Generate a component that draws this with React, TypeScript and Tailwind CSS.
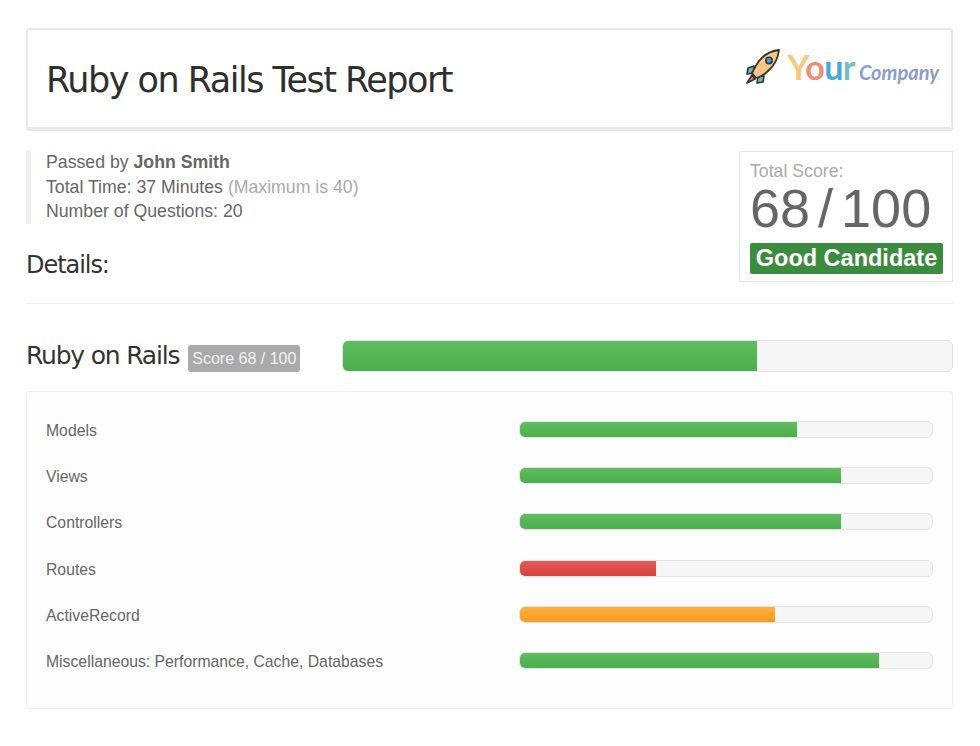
import React from "react";

type Skill = { name: string; width: string; color: string };

const green = "bg-gradient-to-b from-[#5fbe5f] to-[#4cae4c]";

const skills: Skill[] = [
  { name: "Models", width: "w-[67.3%]", color: green },
  { name: "Views", width: "w-[78%]", color: green },
  { name: "Controllers", width: "w-[78%]", color: green },
  { name: "Routes", width: "w-[33%]", color: "bg-gradient-to-b from-[#e35b5a] to-[#d43f3a]" },
  { name: "ActiveRecord", width: "w-[62%]", color: "bg-gradient-to-b from-[#ffb03b] to-[#fb9a1c]" },
  { name: "Miscellaneous: Performance, Cache, Databases", width: "w-[87.2%]", color: green },
];

const Rocket = () => (
  <svg width="36" height="36" viewBox="0 0 36 36" className="shrink-0">
    <path d="M9 17 L3 19 L2 25 L9 24 Z" fill="#6fb6c4" stroke="#333" strokeWidth="1.6" strokeLinejoin="round" />
    <path d="M19 27 L18 33 L12 34 L13 27 Z" fill="#6fb6c4" stroke="#333" strokeWidth="1.6" strokeLinejoin="round" />
    <path d="M7 26 L2 34 L10 30 Z" fill="#ee8266" stroke="#333" strokeWidth="1.6" strokeLinejoin="round" />
    <path d="M34 1 C25 2 18 7 14 12 C11 16 9 20 7 24 L11 29 C15 28 19 26 23 22 C29 17 33 10 34 1 Z" fill="#f8c684" stroke="#333" strokeWidth="1.8" strokeLinejoin="round" />
    <circle cx="24" cy="11.5" r="3.2" fill="#3f9fdc" stroke="#333" strokeWidth="1.5" />
  </svg>
);

const Logo = () => (
  <div className="flex items-center">
    <Rocket />
    <div className="ml-[6px] flex items-baseline font-['Lato',sans-serif]">
      <span className="text-[34px] font-bold leading-none tracking-[-0.5px]">
        <span className="text-[#f6c77f]">Y</span>
        <span className="text-[#ee8d77]">o</span>
        <span className="text-[#45a9dc]">u</span>
        <span className="text-[#7fbcc0]">r</span>
      </span>
      <span className="ml-[4px] text-[20px] italic font-bold leading-none text-[#8b9cc9]">Company</span>
    </div>
  </div>
);

const Bar = ({ width, color, big }: { width: string; color: string; big?: boolean }) => (
  <div
    className={`overflow-hidden border border-[#e3e3e3] bg-[#f6f6f6] ${
      big ? "h-[32px] rounded-[6px]" : "h-[17px] rounded-[6px]"
    }`}
  >
    <div className={`h-full ${width} ${color}`}></div>
  </div>
);

export default function App() {
  return (
    <div className="min-h-[746px] bg-white pl-[26px] pr-[27px] pt-[28px] font-['Liberation_Sans',sans-serif] text-[17.7px] text-[#666]">
      <div className="flex h-[103px] items-start justify-between rounded-[3px] border-2 border-b-4 border-[#e8e8e8] pl-[18px] pr-[12px]">
        <h1 className="mt-[28px] whitespace-nowrap font-['DejaVu_Sans',sans-serif] text-[35px] leading-[44px] tracking-[-1.5px] text-[#2f2f2f]">
          Ruby on Rails Test Report
        </h1>
        <div className="mt-[19px]">
          <Logo />
        </div>
      </div>

      <div className="mt-[19px] flex items-start justify-between">
        <div className="flex-1">
          <div className="border-l-[5px] border-[#eee] pl-[15px] leading-[24.5px]">
            <div>
              Passed by <b>John Smith</b>
            </div>
            <div>
              Total Time: 37 Minutes <span className="text-[#aaa]">(Maximum is 40)</span>
            </div>
            <div>Number of Questions: 20</div>
          </div>
          <h2 className="mt-[24px] font-['DejaVu_Sans',sans-serif] text-[24px] leading-[34px] tracking-[-1.05px] text-[#333]">
            Details:
          </h2>
        </div>
        <div className="mt-px h-[131px] w-[214px] border border-[#e6e6e6] pl-[10px] pr-[9px] pt-[8px]">
          <div className="leading-[22px] text-[#aaa]">Total Score:</div>
          <div className="mt-[-1px] whitespace-nowrap text-[54px] leading-[54px] text-[#666] [word-spacing:-7px]">68 / 100</div>
          <div className="mt-[8px] h-[31px] rounded-[2px] bg-[#3c8c40] text-center text-[23.5px] font-bold leading-[31px] text-white">
            Good Candidate
          </div>
        </div>
      </div>

      <hr className="mt-[21px] border-t border-[#eee]" />

      <div className="mt-[36px] flex items-start">
        <div className="flex w-[316px] shrink-0 items-center">
          <h2 className="whitespace-nowrap font-['DejaVu_Sans',sans-serif] text-[25px] leading-[32px] tracking-[-1.2px] text-[#333]">
            Ruby on Rails
          </h2>
          <span className="ml-[9px] mt-[5px] h-[27px] whitespace-nowrap rounded-[3px] bg-[#aaa] px-[4px] text-[16px] leading-[27px] text-[#f2f2f2]">
            Score 68 / 100
          </span>
        </div>
        <div className="flex-1">
          <Bar big width="w-[68%]" color={green} />
        </div>
      </div>

      <div className="mt-[19px] h-[318px] rounded-[3px] border border-[#eee] bg-[#fdfdfd] pl-[19px] pr-[19px] pt-[29px]">
        <div className="flex flex-col gap-[29.2px]">
          {skills.map((s) => (
            <div key={s.name} className="flex h-[17px] items-center">
              <div className="w-[473px] shrink-0 pt-[2px] text-[15.75px] leading-[17px] text-[#666]">{s.name}</div>
              <div className="flex-1">
                <Bar width={s.width} color={s.color} />
              </div>
            </div>
          ))}
        </div>
      </div>
    </div>
  );
}
